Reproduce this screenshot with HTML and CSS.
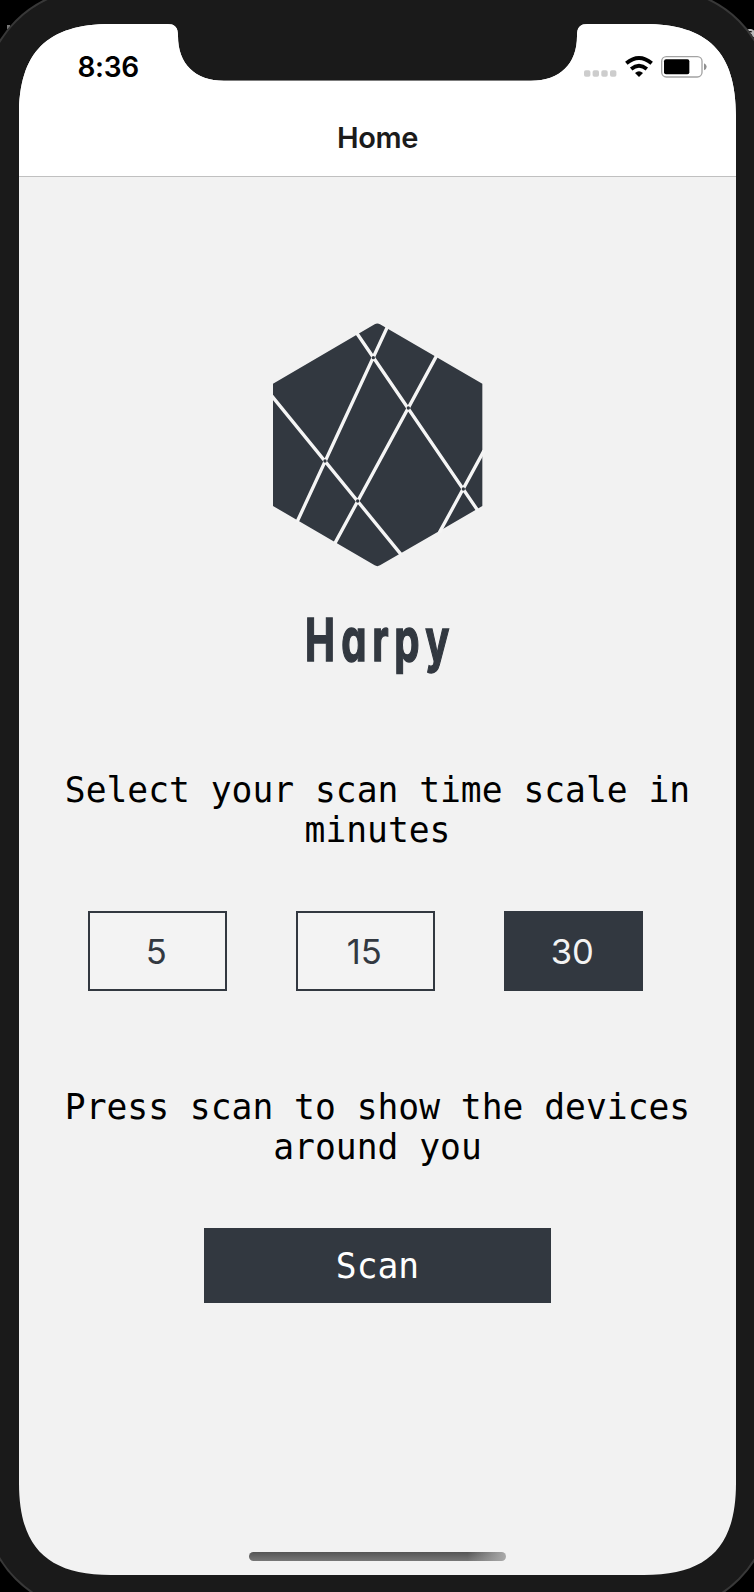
FILE: index.html
```html
<!DOCTYPE html>
<html lang="en">
<head>
<meta charset="utf-8">
<title>Home</title>
<link rel="stylesheet" href="styles.css">
</head>
<body>
<div class="desktop">
  <span class="speck speck-left"></span>
  <svg class="speck speck-right" viewBox="0 0 9 9"><path d="M1 2Q4 0 7 2V8M7 4Q3 4 3 6Q4 8 7 6" fill="none" stroke="#bbb" stroke-width="2"/></svg>
  <div class="device">
    <div class="screen">
      <header class="header">
        <div class="status">
          <span class="time">8:36</span>
          <div class="indicators">
            <svg class="dots" viewBox="0 0 33 7"><g fill="#cdcdcd"><rect x="0" y="0.3" width="6.4" height="6.4" rx="1.8"/><rect x="8.6" y="0.3" width="6.4" height="6.4" rx="1.8"/><rect x="17.3" y="0.3" width="6.4" height="6.4" rx="1.8"/><rect x="26" y="0.3" width="6.4" height="6.4" rx="1.8"/></g></svg>
            <svg class="wifi" viewBox="0 0 84 63"><g fill="none" stroke="#000" stroke-width="11.500"><path d="M4 22Q42 -10 80 22"/><path d="M18.500 39Q42 20 65.500 39"/></g><path d="M42 63L30 51Q42 40 54 51Z"/></svg>
            <svg class="battery" viewBox="0 0 137 66"><rect x="2" y="2" width="121" height="61" rx="14" fill="#fff" stroke="#a3a3a3" stroke-width="4"/><rect x="9" y="10" width="76" height="45" rx="6"/><path d="M129 22Q137 25 137 32.500T129 43Z" fill="#8f8f8f"/></svg>
          </div>
        </div>
        <h1 class="title">Home</h1>
      </header>
      <main class="content">
        <svg class="logo" viewBox="0 0 750 810">
          <path fill="#323840" d="M374 43Q382 38 390 43L697 221V588L572 661L390 766Q382 771 374 766L69 588V221Z"/>
          <g stroke="#f5f5f5" stroke-width="10">
            <path d="M320 69L685 604M412 51L141 636M560 137L254 701M64 256L456 737M702 422L568 668"/>
          </g>
          <g fill="#323840"><circle cx="370" cy="143" r="5"/><circle cx="475" cy="294" r="5"/><circle cx="640" cy="537" r="5"/><circle cx="225" cy="453" r="5"/><circle cx="323" cy="573" r="5"/></g>
        </svg>
        <svg class="wordmark" viewBox="0 0 180 100"><text class="wordmark-text" transform="translate(0 70.500) scale(.68 1)" x="22 75.500 121 153.500 199">Harpy</text></svg>
        <p class="prompt">Select your scan time scale in minutes</p>
        <div class="options">
          <button class="option">5</button>
          <button class="option">15</button>
          <button class="option selected">30</button>
        </div>
        <p class="prompt">Press scan to show the devices around you</p>
        <button class="scan">Scan</button>
      </main>
      <div class="home-indicator"></div>
    </div>
  </div>
</div>
</body>
</html>
```
FILE: styles.css
```css
* { box-sizing: border-box; }
body { margin: 0; background: #000; }
.desktop {
  position: relative;
  width: 754px;
  height: 1592px;
  overflow: hidden;
  background: #000;
}
.speck { position: absolute; }
.speck-left { left: 7px; top: 25px; width: 3px; height: 4px; background: #777; }
.speck-right { left: 746px; top: 29px; width: 9px; height: 9px; }
.device {
  position: relative;
  width: 789px;
  height: 1624px;
  margin: -12px 0 0 -17px;
  padding: 34px 34px 0;
  border: 2px solid #383838;
  border-radius: 110px;
  background: #1a1a1a;
}
.screen {
  display: flex;
  flex-direction: column;
  width: 717px;
  height: 1551px;
  background: #f2f2f2;
  clip-path: path("M0 92C0 28 28 0 92 0H148C156 0 159 3 159 12C159 40 176 56.700 205 56.700H512C541 56.700 558 40 558 12C558 3 561 0 569 0H625C689 0 717 28 717 92V1459C717 1523 689 1551 625 1551H92C28 1551 0 1523 0 1459Z");
}
.header {
  height: 153px;
  border-bottom: 1px solid #c0c0c0;
  background: #fff;
}
.status {
  display: flex;
  justify-content: space-between;
  height: 86px;
  padding: 25px 29px 0 58.500px;
}
.time { font: 600 28px/36px Inter, sans-serif; letter-spacing: -.3px; }
.indicators { display: flex; align-items: flex-start; padding-top: 7px; }
.dots { width: 33px; height: 7px; margin: 14px 8px 0 0; }
.wifi { width: 28px; height: 21px; margin-right: 8.500px; }
.battery { width: 45.700px; height: 22px; }
.title {
  margin: 10px 0 0;
  font: 600 29px/36px Inter, sans-serif;
  letter-spacing: -.4px;
  text-align: center;
  color: #1b1b1b;
}
.content { display: flex; flex: 1; flex-direction: column; align-items: center; }
.logo { width: 250px; height: 270px; margin: 133px 0 10px -4.500px; }
.wordmark { width: 180px; height: 100px; margin-left: 4.500px; }
.wordmark-text {
  fill: #323840;
  stroke: #323840;
  stroke-width: 1.500px;
  font: 700 59px Inter, sans-serif;
  font-feature-settings: "cv11";
}
.prompt {
  width: 660px;
  margin: 80px 0 0;
  font: 34.630px/40px "DejaVu Sans Mono", monospace;
  text-align: center;
  color: #000;
}
.options { display: flex; align-self: flex-start; gap: 69.300px; padding: 61px 0 0 69px; margin-bottom: 16px; }
.option {
  width: 138.700px;
  height: 80px;
  padding: 0 2px 0 0;
  border: 2px solid #323840;
  background: #f3f3f3;
  color: #323840;
  font: 400 34.600px/42px Inter, sans-serif;
}
.selected { background: #323840; color: #f3f3f3; }
.scan {
  width: 347px;
  height: 75px;
  margin-top: 61px;
  padding: 0;
  border: 0;
  background: #323840;
  color: #fff;
  font: 34.630px/40px "DejaVu Sans Mono", monospace;
}
.home-indicator {
  align-self: center;
  width: 257px;
  height: 9px;
  margin-bottom: 14px;
  border-radius: 5px;
  background:
    linear-gradient(90deg, transparent 85%, #aaa 100%),
    linear-gradient(#555, #777);
}
```
